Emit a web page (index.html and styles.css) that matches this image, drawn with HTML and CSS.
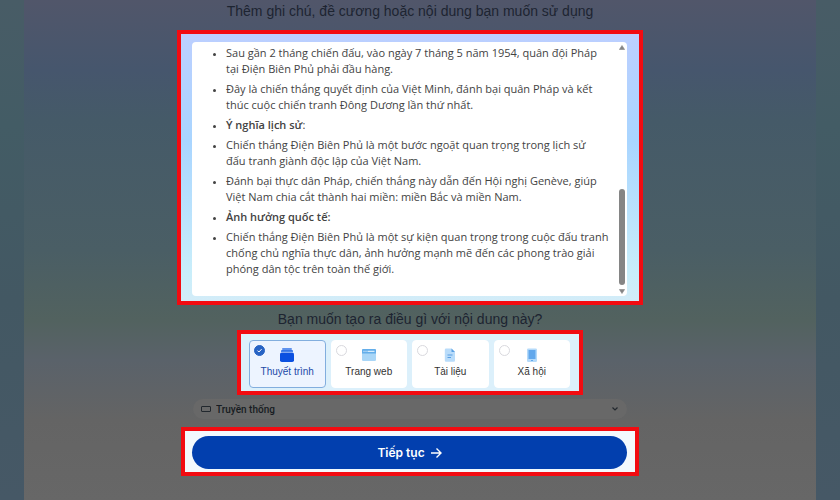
FILE: index.html
```html
<!DOCTYPE html>
<html lang="vi">

<head>
    <meta charset="UTF-8">
    <meta name="viewport" content="width=device-width, initial-scale=1.0">
    <title>Tạo nội dung</title>
    <link rel="stylesheet" href="styles.css">
</head>

<body>
    <main class="page">
        <form class="content">
            <h1 class="title">Thêm ghi chú, đề cương hoặc nội dung bạn muốn sử dụng</h1>

            <section class="highlight highlight-notes">
                <div class="notes">
                    <ul class="notes-list">
                        <li>Sau gần 2 tháng chiến đấu, vào ngày 7 tháng 5 năm 1954, quân đội Pháp<br>tại Điện Biên Phủ phải đầu hàng.</li>
                        <li>Đây là chiến thắng quyết định của Việt Minh, đánh bại quân Pháp và kết<br>thúc cuộc chiến tranh Đông Dương lần thứ nhất.</li>
                        <li><strong>Ý nghĩa lịch sử</strong>:</li>
                        <li>Chiến thắng Điện Biên Phủ là một bước ngoặt quan trọng trong lịch sử<br>đấu tranh giành độc lập của Việt Nam.</li>
                        <li>Đánh bại thực dân Pháp, chiến thắng này dẫn đến Hội nghị Genève, giúp<br>Việt Nam chia cắt thành hai miền: miền Bắc và miền Nam.</li>
                        <li><strong>Ảnh hưởng quốc tế:</strong></li>
                        <li>Chiến thắng Điện Biên Phủ là một sự kiện quan trọng trong cuộc đấu tranh<br>chống chủ nghĩa thực dân, ảnh hưởng mạnh mẽ đến các phong trào giải<br>phóng dân tộc trên toàn thế giới.</li>
                    </ul>
                    <div class="scrollbar">
                        <svg width="6" height="5" viewBox="0 0 6 5"><path d="M3 0.5L5.6 4.5H0.4z" fill="#858585" stroke="#858585" stroke-linejoin="round" stroke-width=".6" /></svg>
                        <div class="thumb"></div>
                        <svg width="6" height="5" viewBox="0 0 6 5"><path d="M3 4.5L5.6 0.5H0.4z" fill="#858585" stroke="#858585" stroke-linejoin="round" stroke-width=".6" /></svg>
                    </div>
                </div>
            </section>

            <h2 class="title">Bạn muốn tạo ra điều gì với nội dung này?</h2>

            <section class="highlight highlight-types">
                <label class="type">
                    <input type="radio" name="type" checked>
                    <svg class="icon" width="16" height="16" viewBox="0 0 16 16">
                        <rect x="3" y="1" width="10" height="2" rx="1" fill="#5f93ee" />
                        <rect x="2" y="3" width="12" height="3" rx="1" fill="#3474e6" />
                        <rect x="1" y="5.5" width="14" height="9.5" rx="1.8" fill="#0b50e0" />
                        <path d="M2 5.3h12" stroke="#edf4ff" stroke-width=".6" />
                    </svg>
                    <span>Thuyết trình</span>
                </label>
                <label class="type">
                    <input type="radio" name="type">
                    <svg class="icon" width="16" height="16" viewBox="0 0 16 16">
                        <rect x="1" y="2" width="14" height="12" rx="1.2" fill="#a9d6f7" />
                        <path d="M2.2 2h11.6A1.2 1.2 0 0 1 15 3.2V6.5H1V3.2A1.2 1.2 0 0 1 2.2 2z" fill="#64aeea" />
                        <path d="M2.5 4.3h1M4.5 4.3h1M6.5 4.3h7" stroke="#d8edfc" stroke-width="1.2" />
                    </svg>
                    <span>Trang web</span>
                </label>
                <label class="type">
                    <input type="radio" name="type">
                    <svg class="icon" width="16" height="16" viewBox="0 0 16 16">
                        <path d="M4 1.5h5.5L13 5v8.5a1.2 1.2 0 0 1-1.2 1.2H4A1.2 1.2 0 0 1 2.8 13.5V2.7A1.2 1.2 0 0 1 4 1.5z" fill="#b9dcfa" />
                        <path d="M9.5 1.5L13 5H9.5z" fill="#5a9fe2" />
                        <path d="M5.5 8h5M5.5 10.5h3.5" stroke="#5a9fe2" />
                    </svg>
                    <span>Tài liệu</span>
                </label>
                <label class="type">
                    <input type="radio" name="type">
                    <svg class="icon" width="16" height="16" viewBox="0 0 16 16">
                        <rect x="3" y="1.5" width="10" height="13.5" rx="1.2" fill="#b4dafa" />
                        <rect x="4.5" y="3" width="7" height="9" fill="#62a8ec" />
                        <path d="M7 13.5h2" stroke="#62a8ec" />
                    </svg>
                    <span>Xã hội</span>
                </label>
            </section>

            <div class="size">
                <svg width="10" height="6" viewBox="0 0 10 6"><rect x=".5" y=".5" width="9" height="5" rx=".5" fill="none" stroke="#22282e" /></svg>
                <select class="size-select" aria-label="Kích thước">
                    <option>Truyền thống</option>
                </select>
                <svg width="8" height="6" viewBox="0 0 8 6"><path d="M1.5 1.5L4 4l2.5-2.5" fill="none" stroke="#22282e" stroke-width="1.2" /></svg>
            </div>

            <section class="highlight highlight-submit">
                <button type="button" class="submit">
                    Tiếp tục
                    <svg width="12" height="12" viewBox="0 0 12 12"><path d="M1 6h10M6.5 1.5L11 6l-4.5 4.5" fill="none" stroke="#fff" stroke-width="1.4" /></svg>
                </button>
            </section>
        </form>
    </main>
</body>

</html>
```

FILE: styles.css
```css
* {
    box-sizing: border-box;
}

body {
    margin: 0;
    padding: 0 24px;
    min-height: 100vh;
    display: flex;
    font-family: 'Liberation Sans', Arial, sans-serif;
    background: linear-gradient(#485c66, #435c65 25%, #435863 60%, #465866);
}

.page {
    flex: 1;
    padding-right: 20px;
    background: linear-gradient(#51566a, #46566d 14%, #455a68 24%, #4a5e65 50%, #52625f 64%, #5a626a 72%, #646464 84%, #676767);
}

.content {
    max-width: 466px;
    margin: 0 auto;
    display: flex;
    flex-direction: column;
    align-items: center;
}

.title {
    margin: 0;
    font-size: 14px;
    font-weight: 400;
    line-height: 22px;
    color: #1d2431;
}

h1.title {
    margin-bottom: 8px;
}

h2.title {
    margin-top: 3px;
}

.highlight {
    border: 4px solid #f20b11;
}

.highlight-notes {
    width: 100%;
    padding: 8px 12px 5px 11px;
    background: linear-gradient(#bccfff, #a9d5ff 40%, #c9eefa 90%, #d3ecf8);
}

.notes {
    display: flex;
    height: 254px;
    border-radius: 4px;
    background-color: #fff;
}

.notes-list {
    flex: 1;
    margin: 0;
    padding: 3px 0 0 34px;
    font-family: 'Open Sans', sans-serif;
    font-size: 11px;
    line-height: 16px;
    white-space: nowrap;
    color: #434343;
}

.notes-list li {
    margin-bottom: 4px;
}

.notes-list li::marker {
    font-size: 9px;
}

.notes-list strong {
    font-weight: 600;
}

.scrollbar {
    width: 10px;
    padding: 3px 0 2px;
    display: flex;
    flex-direction: column;
    align-items: center;
    gap: 4px;
}

.thumb {
    width: 6px;
    height: 96px;
    margin-top: auto;
    border-radius: 3px;
    background-color: #858585;
}

.highlight-types {
    width: 346px;
    max-width: 100%;
    padding: 6px 9px 3px 8px;
    display: grid;
    grid-template-columns: repeat(4, 1fr);
    gap: 5px;
    background-color: #dcf0fb;
}

.type {
    position: relative;
    height: 48px;
    padding-top: 6px;
    display: flex;
    flex-direction: column;
    align-items: center;
    gap: 2px;
    border: 1px solid #fff;
    border-radius: 4px;
    background-color: #fff;
    font-size: 10px;
    line-height: 14px;
    color: #333;
    cursor: pointer;
}

.type:has(:checked) {
    border-color: #82aede;
    background-color: #edf4ff;
    color: #1c4aa8;
}

.type input {
    position: absolute;
    top: 4px;
    left: 4px;
    appearance: none;
    width: 11px;
    height: 11px;
    margin: 0;
    border: 1px solid #d9d9de;
    border-radius: 50%;
}

.type input:checked {
    border-color: #2763c4;
    background: #2763c4 url("data:image/svg+xml,%3Csvg xmlns='http://www.w3.org/2000/svg' viewBox='0 0 9 9'%3E%3Cpath d='M2.5 4.6l1.4 1.4 2.7-2.9' fill='none' stroke='white'/%3E%3C/svg%3E");
}

.size {
    width: 434px;
    max-width: 100%;
    height: 20px;
    margin: 4px 0 8px;
    padding: 0 8px;
    display: flex;
    align-items: center;
    gap: 5px;
    border-radius: 10px;
    background-color: #686868;
}

.size-select {
    flex: 1;
    appearance: none;
    padding: 0;
    border: none;
    background: transparent;
    font: 500 10px 'Roboto', sans-serif;
    color: #171c22;
}

.highlight-submit {
    width: 458px;
    max-width: 100%;
    padding: 5px 8px 3px 7px;
    background-color: #f3f9fd;
}

.submit {
    width: 100%;
    height: 33px;
    display: flex;
    justify-content: center;
    align-items: center;
    gap: 5px;
    border: none;
    border-radius: 17px;
    background-color: #023fae;
    font: 600 12px 'Inter', sans-serif;
    color: #fff;
    cursor: pointer;
}
```
